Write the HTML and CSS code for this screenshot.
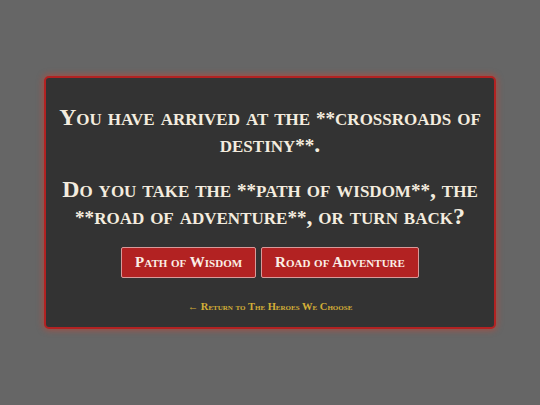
FILE: index.html
```html
<!DOCTYPE html>
<html>
<head>
<meta charset="utf-8">
<link rel="stylesheet" href="styles.css">
</head>
<body>
<div class="card">
  <p class="line">You have arrived at the <span class="ast">**</span>crossroads of destiny<span class="ast">**</span>.</p>
  <p class="line">Do you take the <span class="ast">**</span>path of wisdom<span class="ast">**</span>, the <span class="ast">**</span>road of adventure<span class="ast">**</span>, or turn back?</p>
  <div class="choices">
    <button class="btn">Path of Wisdom</button>
    <button class="btn">Road of Adventure</button>
  </div>
  <a class="back" href="#">← Return to The Heroes We Choose</a>
</div>
</body>
</html>
```
FILE: styles.css
```css
html, body {
  margin: 0;
  height: 100%;
}
body {
  background: #666666;
  display: flex;
  align-items: center;
  justify-content: center;
  font-family: "Liberation Serif", "DejaVu Serif", serif;
}
.card {
  width: 448px;
  box-sizing: content-box;
  background: #333333;
  border: 2px solid #b22222;
  border-radius: 5px;
  box-shadow: 0 0 6px 1px rgba(220, 60, 40, 0.55);
  padding: 22px 0 15px;
  text-align: center;
  display: flex;
  flex-direction: column;
  align-items: center;
}
.line {
  margin: 4px 12px 14px;
  color: #f3ecdf;
  font-size: 23.8px;
  line-height: 27px;
  font-weight: bold;
  font-variant: small-caps;
}
.ast {
  font-size: 0.8em;
  line-height: 1;
}
.choices {
  display: flex;
  gap: 5px;
  margin-top: 3px;
}
.btn {
  background: #b22222;
  color: #fbeee6;
  border: 1px solid #d89a9a;
  border-radius: 2px;
  height: 31px;
  padding: 0 13px;
  font-family: "Liberation Serif", "DejaVu Serif", serif;
  font-size: 15px;
  font-weight: bold;
  font-variant: small-caps;
}
.back {
  margin-top: 23px;
  color: #d4af37;
  font-size: 10.5px;
  font-weight: bold;
  font-variant: small-caps;
  text-decoration: none;
}
```
